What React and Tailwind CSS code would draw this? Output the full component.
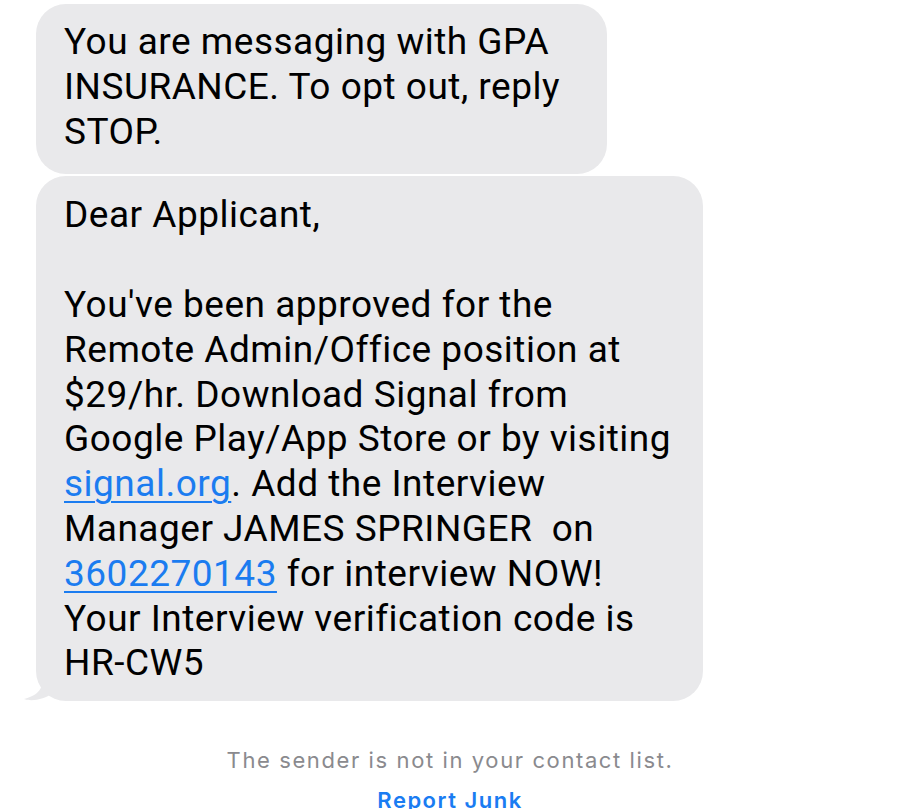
import React from "react";

const lines1 = ["You are messaging with GPA", "INSURANCE. To opt out, reply", "STOP."];

function Link({ children }) {
  return (
    <span className="text-[#1b7cf0] underline decoration-[2px] underline-offset-[5px]">
      {children}
    </span>
  );
}

function Bubble({ className = "", children, tail = false }) {
  return (
    <div className={`relative rounded-[30px] bg-[#e9e9eb] ${className}`}>
      {children}
      {tail && (
        <svg
          className="absolute -left-[13px] bottom-0"
          width="34"
          height="24"
          viewBox="0 0 34 24"
        >
          <path
            d="M20 0 C20 10 17 18 1 22 C9 25 22 22 30 16 L34 0 Z"
            fill="#e9e9eb"
          />
        </svg>
      )}
    </div>
  );
}

export default function App() {
  return (
    <div
      className="h-[809px] w-[900px] overflow-hidden bg-white text-black"
      style={{ fontFamily: "Roboto, 'Noto Sans', sans-serif" }}
    >
      <div className="flex flex-col items-start gap-[2px] pl-[36px] pt-[4px]">
        <Bubble className="w-[571px] px-[28px] pb-[20px] pt-[16px]">
          <div className="text-[37px] leading-[44.8px] tracking-[0.5px]">
            {lines1.map((line) => (
              <div key={line} className="whitespace-nowrap">
                {line}
              </div>
            ))}
          </div>
        </Bubble>

        <Bubble tail className="w-[667px] px-[28px] pb-[15px] pt-[17px]">
          <div className="text-[37px] leading-[44.8px] tracking-[0.5px]">
            <div className="whitespace-nowrap">Dear Applicant,</div>
            <div className="h-[44.8px]" />
            <div className="whitespace-nowrap">You've been approved for the</div>
            <div className="whitespace-nowrap">Remote Admin/Office position at</div>
            <div className="whitespace-nowrap">$29/hr. Download Signal from</div>
            <div className="whitespace-nowrap">Google Play/App Store or by visiting</div>
            <div className="whitespace-nowrap">
              <Link>signal.org</Link>. Add the Interview
            </div>
            <div className="whitespace-pre">Manager JAMES SPRINGER  on</div>
            <div className="whitespace-nowrap">
              <Link>3602270143</Link> for interview NOW!
            </div>
            <div className="whitespace-nowrap">Your Interview verification code is</div>
            <div className="whitespace-nowrap">HR-CW5</div>
          </div>
        </Bubble>
      </div>

      <div
        className="mt-[44px] flex flex-col items-center text-center"
        style={{ fontFamily: "Inter, 'Noto Sans', sans-serif" }}
      >
        <div className="text-[22px] leading-[30px] tracking-[1.6px] text-[#8a8a8e]">
          The sender is not in your contact list.
        </div>
        <div className="mt-[10px] text-[22px] font-semibold leading-[30px] tracking-[1.5px] text-[#1a7cf2]">
          Report Junk
        </div>
      </div>
    </div>
  );
}
